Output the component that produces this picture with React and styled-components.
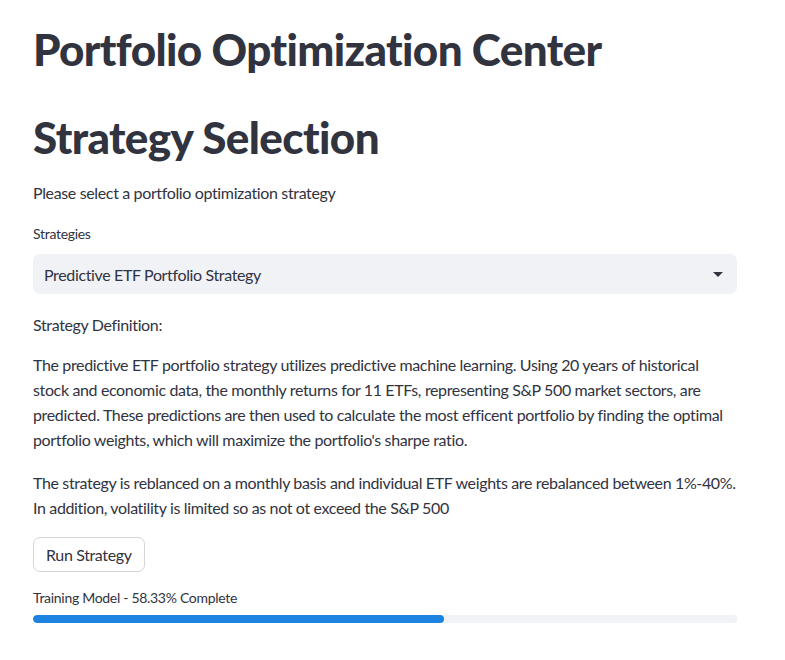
import React from 'react'
import styled, { createGlobalStyle } from 'styled-components'

const GlobalStyle = createGlobalStyle`
  body {
    margin: 0;
    background: #ffffff;
    font-family: 'Lato', 'Noto Sans', sans-serif;
    color: #31333f;
  }
`

const Page = styled.main`
  width: 704px;
  padding: 22px 0 40px 33px;
  display: flex;
  flex-direction: column;
`

const Title = styled.h1`
  margin: 0;
  font-size: 44px;
  font-weight: 900;
  line-height: 54px;
  letter-spacing: -0.6px;
  margin-top: ${p => p.$top || 0}px;
`

const Text = styled.p`
  margin: 0;
  font-size: 16px;
  line-height: 25px;
  letter-spacing: -0.36px;
  margin-top: ${p => p.$top || 0}px;
`

const Label = styled.label`
  font-size: 14px;
  line-height: 20px;
  letter-spacing: -0.3px;
  margin-top: 19px;
`

const Select = styled.div`
  margin-top: 10px;
  height: 40px;
  border-radius: 7px;
  background: #f0f2f6;
  display: flex;
  align-items: center;
  justify-content: space-between;
  padding: 0 12px 0 11px;
  font-size: 16px;
  letter-spacing: -0.36px;
`

const Caret = styled.span`
  width: 0;
  height: 0;
  border-left: 5px solid transparent;
  border-right: 5px solid transparent;
  border-top: 5px solid #31333f;
  margin-right: 2px;
`

const Button = styled.button`
  align-self: flex-start;
  margin-top: 17px;
  height: 35px;
  padding: 0 12px;
  border: 1px solid #d6d6d9;
  border-radius: 7px;
  background: #fff;
  color: #31333f;
  font-family: inherit;
  font-size: 16px;
  letter-spacing: -0.36px;
`

const ProgressLabel = styled.div`
  font-size: 14px;
  line-height: 20px;
  letter-spacing: -0.3px;
  margin-top: 16px;
`

const Track = styled.div`
  margin-top: 7px;
  height: 8px;
  border-radius: 4px;
  background: #f0f2f6;
  overflow: hidden;
`

const Fill = styled.div`
  height: 100%;
  border-radius: 4px;
  background: #1c83e1;
`

export default function App() {
  const progress = 58.33
  return (
    <>
      <GlobalStyle />
      <Page>
        <Title>Portfolio Optimization Center</Title>
        <Title $top={34}>Strategy Selection</Title>
        <Text $top={16}>Please select a portfolio optimization strategy</Text>
        <Label>Strategies</Label>
        <Select>
          <span>Predictive ETF Portfolio Strategy</span>
          <Caret />
        </Select>
        <Text $top={18}>Strategy Definition:</Text>
        <Text $top={15}>
          The predictive ETF portfolio strategy utilizes predictive machine learning. Using 20 years of historical
          stock and economic data, the monthly returns for 11 ETFs, representing S&amp;P 500 market sectors, are
          predicted. These predictions are then used to calculate the most efficent portfolio by finding the optimal
          portfolio weights, which will maximize the portfolio's sharpe ratio.
        </Text>
        <Text $top={18}>
          The strategy is reblanced on a monthly basis and individual ETF weights are rebalanced between 1%-40%.
          In addition, volatility is limited so as not ot exceed the S&amp;P 500
        </Text>
        <Button>Run Strategy</Button>
        <ProgressLabel>Training Model - 58.33% Complete</ProgressLabel>
        <Track>
          <Fill style={{ width: `${progress}%` }} />
        </Track>
      </Page>
    </>
  )
}
